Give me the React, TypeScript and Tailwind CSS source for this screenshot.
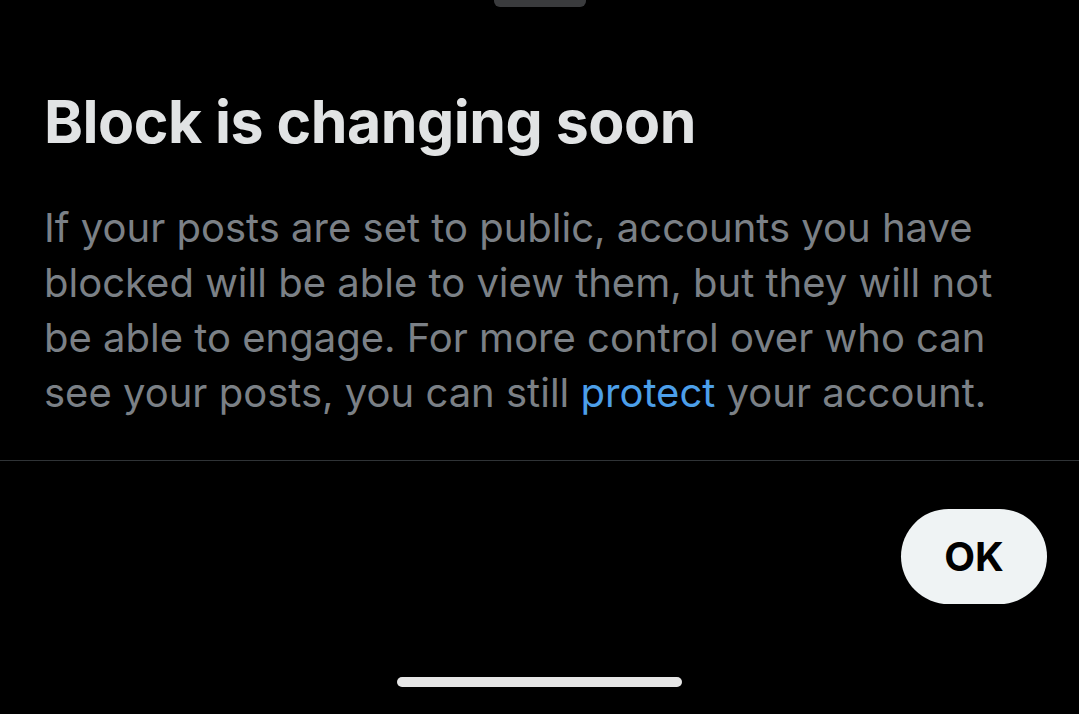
import React from 'react'

const App = () => {
  return (
    <div className="w-[1079px] h-[714px] bg-black flex flex-col overflow-hidden font-['Inter',sans-serif]">
      <div className="flex justify-center">
        <div className="w-[92px] h-[7px] rounded-b-md bg-[#3a3b3d]"></div>
      </div>

      <div className="px-[44px] pt-[80px]">
        <h1 className="text-[59px] leading-[70px] font-bold text-[#e1e3e4] tracking-[-0.5px] whitespace-nowrap">
          Block is changing soon
        </h1>
        <p className="mt-[43px] text-[40px] leading-[55px] text-[#7b8086] whitespace-nowrap">
          <span className="block">If your posts are set to public, accounts you have</span>
          <span className="block">blocked will be able to view them, but they will not</span>
          <span className="block">be able to engage. For more control over who can</span>
          <span className="block">
            see your posts, you can still <span className="text-[#4c9fe9]">protect</span> your account.
          </span>
        </p>
      </div>

      <hr className="mt-[40px] border-none h-[1px] bg-[#2f3336]" />

      <div className="flex justify-end px-[32px] pt-[48px]">
        <button className="w-[146px] h-[95px] rounded-full bg-[#eff3f4] text-black text-[40px] font-bold">
          OK
        </button>
      </div>

      <div className="flex justify-center mt-auto mb-[27px]">
        <div className="w-[285px] h-[10px] rounded-full bg-[#e6e6e6]"></div>
      </div>
    </div>
  )
}

export default App
